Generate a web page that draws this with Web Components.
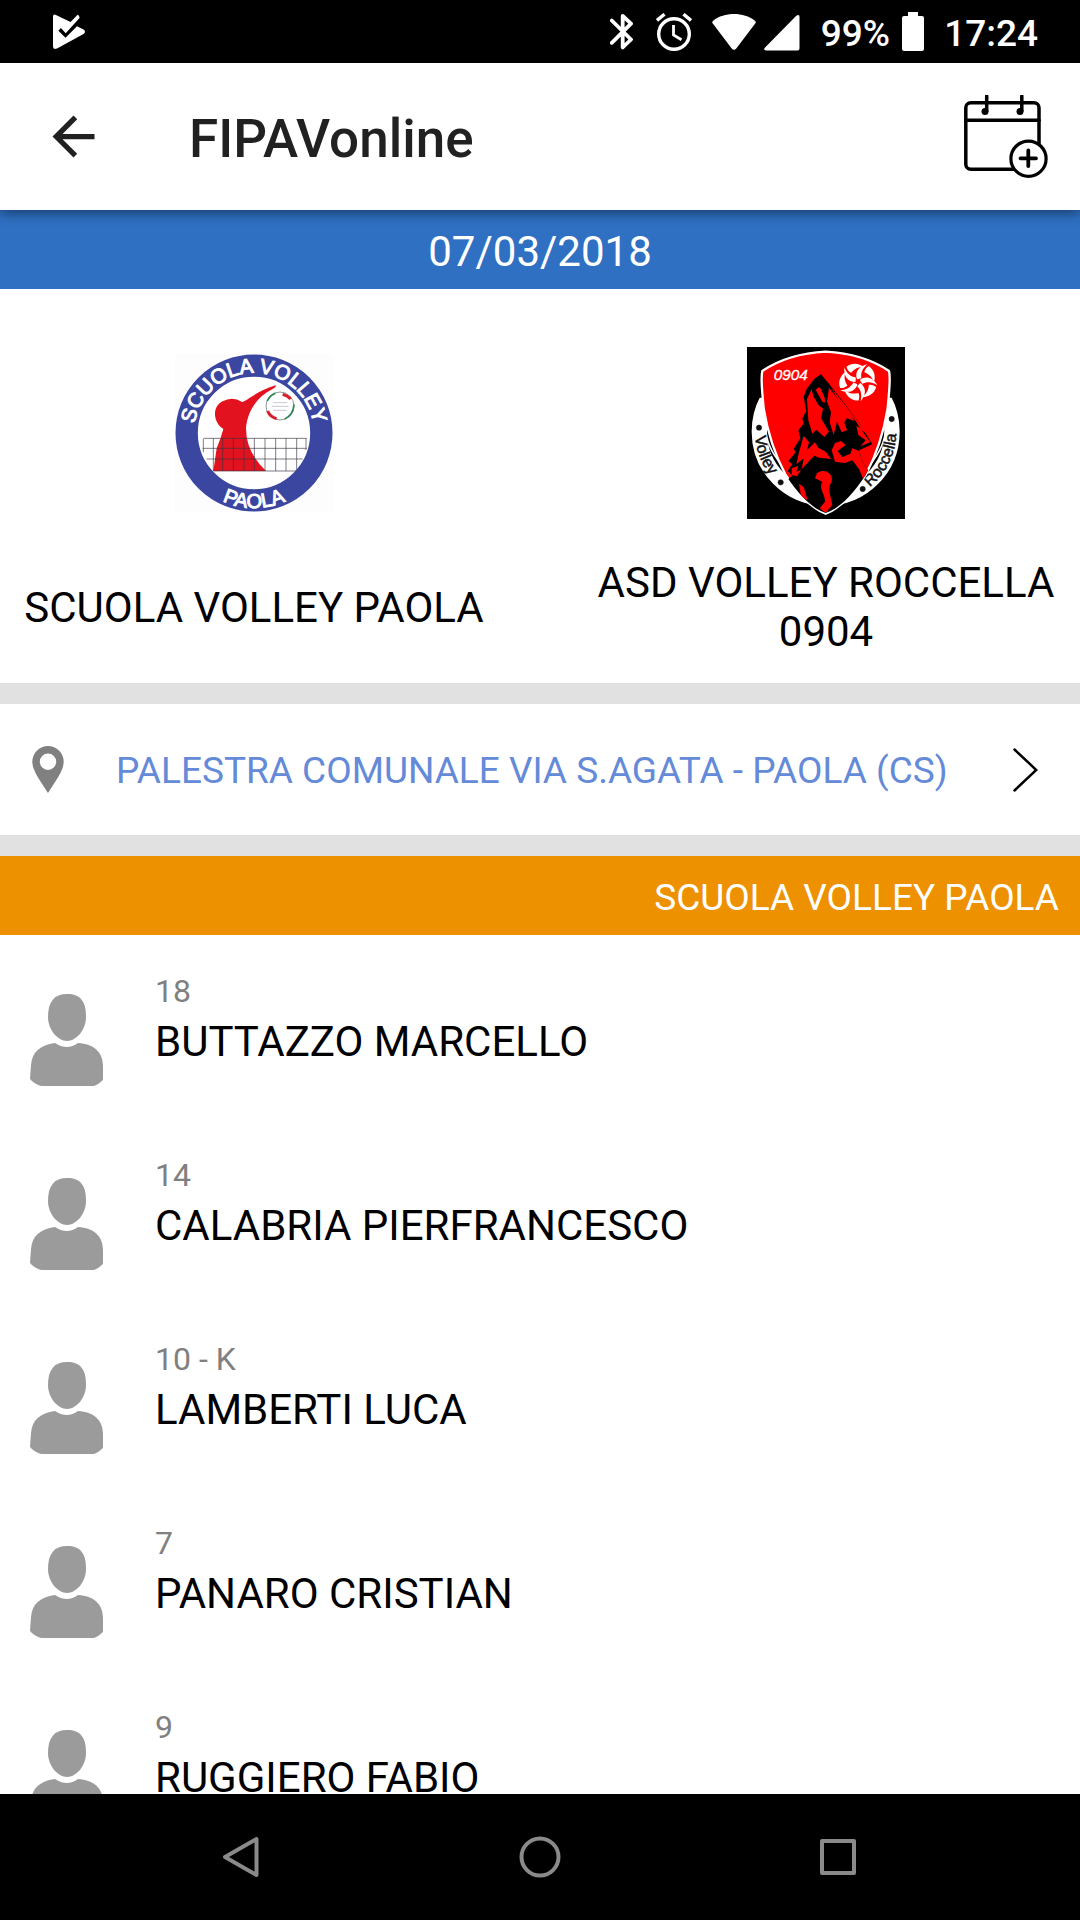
<!DOCTYPE html>
<html lang="it">
<head>
<meta charset="utf-8">
<meta name="viewport" content="width=device-width, initial-scale=1">
<title>FIPAVonline</title>
<style>
  body {
    margin: 0;
    height: 100vh;
    display: flex;
    flex-direction: column;
    background: #fff;
    color: #000;
    font-family: Roboto, "Liberation Sans", sans-serif;
    font-size: 42px;
    line-height: 49px;
  }
  main { flex: 1; min-height: 0; overflow: hidden; }
</style>
</head>
<body>
  <status-bar></status-bar>
  <app-bar>FIPAVonline</app-bar>
  <main>
    <date-banner>07/03/2018</date-banner>
    <match-teams>
      <team-card><crest-paola slot="logo"></crest-paola>SCUOLA VOLLEY PAOLA</team-card>
      <team-card><crest-roccella slot="logo"></crest-roccella>ASD VOLLEY ROCCELLA 0904</team-card>
    </match-teams>
    <venue-link>PALESTRA COMUNALE VIA S.AGATA - PAOLA (CS)</venue-link>
    <team-heading>SCUOLA VOLLEY PAOLA</team-heading>
    <player-row><span slot="number">18</span>BUTTAZZO MARCELLO</player-row>
    <player-row><span slot="number">14</span>CALABRIA PIERFRANCESCO</player-row>
    <player-row><span slot="number">10 - K</span>LAMBERTI LUCA</player-row>
    <player-row><span slot="number">7</span>PANARO CRISTIAN</player-row>
    <player-row><span slot="number">9</span>RUGGIERO FABIO</player-row>
  </main>
  <nav-bar></nav-bar>

<script>
const define = (name, html) => {
  const template = document.createElement('template');
  template.innerHTML = html;
  customElements.define(name, class extends HTMLElement {
    constructor() {
      super();
      this.attachShadow({ mode: 'open' }).append(template.content.cloneNode(true));
    }
  });
};

define('status-bar', `
  <style>
    :host { display: flex; align-items: center; height: 63px; padding: 0 42px 0 53px; background: #000; color: #fff;
            font-size: 37px; font-weight: 500; line-height: 43px; }
    svg { display: block; fill: #fff; }
    span { padding-top: 3px; }
    .space { flex: 1; }
    .bt { margin-right: 23px; } .alarm { margin-right: 20px; } .wifi { margin-right: 8px; }
    .signal { margin-right: 21px; } .battery { margin: 0 20px 0 12px; }
  </style>
  <svg width="33" height="36" viewBox="0 0 33 36" aria-hidden="true">
    <path d="M0 2.5Q0 -.5 3 .9L17.5 8 24.6.8Q26.700 1.600 26.500 4L12.700 19.300 7.900 14 5.400 16.700 12.500 23.700 24 12.300 30.500 15.500Q33.500 17.500 30.500 20L4 34.500Q0 36 0 32.500Z"/>
  </svg>
  <span class="space"></span>
  <svg class="bt" width="23" height="37" viewBox="0 0 23 37" aria-hidden="true">
    <path d="M1.800 7.500 21 26.500 12.700 34.500V2.800L21 10.700 1.800 29.800" fill="none" stroke="#fff" stroke-width="3.800" stroke-linejoin="round" stroke-linecap="round"/>
  </svg>
  <svg class="alarm" width="36" height="38" viewBox="0 0 36 38" aria-hidden="true">
    <g fill="none" stroke="#fff" stroke-width="3.400"><circle cx="18" cy="21" r="15.300"/><path d="M1 7.500 8.500 1.200M35 7.500 27.500 1.200"/><path d="M17.500 12V22L25.500 26.800" stroke-width="2.800"/></g>
  </svg>
  <svg class="wifi" width="44" height="38" viewBox="0 0 44 38" aria-hidden="true">
    <path d="M.8 10.500Q-.5 8.900 1.200 7.700C12-1.200 32-1.200 42.800 7.700Q44.500 8.900 43.200 10.500L24.300 35.500Q22 38.200 19.700 35.500Z"/>
  </svg>
  <svg class="signal" width="36" height="38" viewBox="0 0 36 38" aria-hidden="true">
    <path d="M.8 34.800 32.300 2.800Q35.500.5 35.500 4V35.500Q35.500 37.500 33.500 37.500H2Q-1 37 .8 34.800Z"/>
  </svg>
  <span>99%</span>
  <svg class="battery" width="22" height="39" viewBox="0 0 22 39" aria-hidden="true">
    <path d="M6 0H16V4H20Q22 4 22 6V37Q22 39 20 39H2Q0 39 0 37V6Q0 4 2 4H6Z"/>
  </svg>
  <span>17:24</span>
`);

define('app-bar', `
  <style>
    :host { display: flex; align-items: center; height: 147px; padding: 0 32px 0 42px; background: #fff; color: #212121;
            position: relative; z-index: 1; box-shadow: 0 4px 11px rgba(0,0,0,.42); }
    button { border: 0; padding: 0; background: none; display: block; }
    svg { display: block; }
    h1 { flex: 1; margin: 0 0 0 84px; padding-top: 5px; font-size: 53px; font-weight: 500; line-height: 63px; }
  </style>
  <button aria-label="Indietro"><svg width="63" height="63" viewBox="0 0 24 24"><path fill="#212121" d="M20 11H7.830L13.420 5.410 12 4 4 12 12 20 13.410 18.590 7.830 13H20Z"/></svg></button>
  <h1><slot></slot></h1>
  <button aria-label="Aggiungi al calendario"><svg width="84" height="84" viewBox="964 95 84 84">
    <g fill="none" stroke="#000" stroke-width="3.500" stroke-linecap="round">
      <rect x="965.800" y="102.700" width="73.200" height="66.600" rx="5"/><path d="M966 120.200H1039"/>
      <path d="M986.700 96V111M1021.800 96V111"/>
    </g>
    <circle cx="985" cy="111.500" r="3.500"/><circle cx="1020" cy="111.500" r="3.500"/>
    <circle cx="1028.500" cy="158.700" r="17.600" fill="#fff" stroke="#000" stroke-width="3.200"/>
    <path d="M1020.500 158.300H1036M1028.300 150.500V166" stroke="#000" stroke-width="3.800" stroke-linecap="round"/>
  </svg></button>
`);

define('date-banner', `
  <style>:host { display: block; padding: 17px 21px 13px; text-align: center; background: #2f70c3; color: #fff; }</style>
  <slot></slot>
`);

define('match-teams', `
  <style>:host { display: grid; grid-template-columns: 1fr 1fr; gap: 106px; padding: 58px 21px 27px; }</style>
  <slot></slot>
`);

define('team-card', `
  <style>
    :host { display: flex; flex-direction: column; align-items: center; gap: 39px; text-align: center; }
    .logo { height: 172px; display: flex; align-items: center; }
    .name { flex: 1; display: flex; align-items: center; }
  </style>
  <div class="logo"><slot name="logo"></slot></div>
  <div class="name"><div><slot></slot></div></div>
`);

define('crest-paola', `
  <style>:host { display: block; } svg { display: block; overflow: visible; } text { font-family: "Liberation Sans", sans-serif; fill: #fff; stroke: #fff; stroke-width: 3; }</style>
  <svg width="158" height="158" viewBox="45 57 474 474" role="img" aria-label="Scuola Volley Paola">
    <defs>
      <path id="top" d="M102 294A180 180 0 0 1 462 294"/>
      <path id="bottom" d="M57 294A225 225 0 0 0 507 294"/>
    </defs>
    <rect x="45" y="57" width="474" height="474" fill="#fdfdfd"/>
    <circle cx="282" cy="294" r="202" fill="#fff" stroke="#3a46a0" stroke-width="67"/>
    <path fill="#e2131f" d="M160 408 170 340 182 308 190 282C158 262 156 214 188 199Q218 183 246 201C262 197 290 168 347 151Q350 155 338 162C288 186 262 232 258 280Q258 352 318 408Z"/>
    <path d="M130 310H440M128 340H440M140 372H428M160 408H408M130 312V352M160 310V408M188 310V408M220 310V408M252 310V408M283 310V408M315 310V408M347 310V408M378 310V408M410 310V404M438 310V345" fill="none" stroke="#3c3440" stroke-width="3" opacity=".65"/>
    <g fill="none" stroke-width="5">
      <circle cx="360" cy="213" r="42" fill="#fff" stroke="#8b9a92" stroke-width="3"/>
      <path stroke="#2b8a52" d="M322 198Q330 180 346 175M402 208Q400 240 374 252"/>
      <path stroke="#d8202c" stroke-width="9" d="M368 178Q384 182 392 192M323 228Q330 246 350 251"/>
      <path stroke="#aab" stroke-width="2" d="M340 203H382M336 214H386M340 226H380"/>
    </g>
    <text font-size="62" text-anchor="middle"><textPath href="#top" startOffset="50%">SCUOLA VOLLEY</textPath></text>
    <text font-size="60" text-anchor="middle"><textPath href="#bottom" startOffset="50%">PAOLA</textPath></text>
  </svg>
`);

define('crest-roccella', `
  <style>:host { display: block; } svg { display: block; } text { font-family: "Liberation Sans", sans-serif; }</style>
  <svg width="158" height="172" viewBox="36 36 474 516" role="img" aria-label="ASD Volley Roccella 0904">
    <defs>
      <path id="ring" d="M60 290A212 212 0 0 0 484 290"/>
      <g id="blade">
        <path d="M-3 -7C-10 -26 0 -46 28 -52C12 -38 8 -26 10 -10Z"/>
        <path d="M32 -47C48 -36 54 -18 48 2C42 -14 34 -22 19 -28Q20 -38 32 -47Z"/>
      </g>
      <clipPath id="shield"><path d="M272 52Q385 58 460 108C466 130 460 170 458 220Q440 330 392 420Q330 515 272 534Q214 515 152 420Q104 330 86 220C84 170 78 130 84 108Q159 58 272 52Z"/></clipPath>
      <clipPath id="low"><rect x="36" y="188" width="474" height="364"/></clipPath>
    </defs>
    <rect x="36" y="36" width="474" height="516"/>
    <g clip-path="url(#low)"><circle cx="272" cy="290" r="199" fill="none" stroke="#fff" stroke-width="46"/></g>
    <path d="M92 288Q100 350 152 402M452 288Q444 350 392 402" fill="none" stroke="#fff" stroke-width="5"/>
    <g fill="#111" stroke="#111" stroke-width="1.500">
      <text font-size="48"><textPath href="#ring" startOffset="14">Volley</textPath></text>
      <text font-size="48" text-anchor="end"><textPath href="#ring" startOffset="99%">Roccella</textPath></text>
      <circle cx="72" cy="278" r="8"/><circle cx="137" cy="442" r="8"/><circle cx="383" cy="462" r="8"/><circle cx="470" cy="252" r="8"/>
    </g>
    <path fill="#f00" stroke="#fff" stroke-width="7" d="M272 50Q385 56 462 108C468 130 462 170 458 220Q440 330 392 420Q330 515 272 536Q214 515 152 420Q104 330 86 220C82 170 76 130 82 108Q159 56 272 50Z"/>
    <g clip-path="url(#shield)">
      <path d="M258 118 240 130 216 160 206 185 214 228 202 250 206 266 190 286 196 310 176 342 182 352 160 378 172 388 158 408 172 422 150 440 272 550 400 460 385 440 404 412 384 384 372 346 412 328 378 272 330 208 283 148Z"/>
      <g fill="#f00">
        <path d="M216 192 230 162 236 186 264 222 258 250 282 290 268 306 244 284 232 296 220 256Z"/>
        <path d="M242 164 252 156 266 170 276 205 262 200Z"/>
        <path d="M282 158 326 214 358 258 336 250 328 262 336 286 320 292 306 260 296 300 284 262 288 232 276 200Z"/>
        <path d="M288 158 332 212 396 296 378 284 362 258 330 228Z"/>
        <path d="M364 272 376 280 406 322 376 334 392 316 370 300Z"/>
        <path d="M206 302 222 322 216 346 240 322 250 338 272 350 288 372 252 368 238 362 200 402 206 370 184 388 192 352Z"/>
        <path d="M290 346 300 324 318 318 332 330 308 348 322 366 346 356 352 340 372 348 384 384 402 410 386 436 372 402 352 376 330 384 300 380Z"/>
        <path d="M246 414C272 396 300 420 288 444C276 464 288 484 292 510L272 534 254 520 270 500C270 474 250 464 262 440L240 430Z"/>
        <path d="M192 446 206 456 218 496 198 484Z"/>
        <path d="M170 400 190 392 184 410 198 404 186 424 170 420Z"/>
      </g>
      <path d="M232 156Q248 220 270 216Q280 196 262 166" fill="none" stroke="#000" stroke-width="6"/>
    </g>
    <text x="116" y="136" font-size="46" font-style="italic" fill="#fff" stroke="#fff">0904</text>
    <g fill="#fff" transform="translate(369 140)">
      <use href="#blade"/><use href="#blade" transform="rotate(72)"/><use href="#blade" transform="rotate(144)"/><use href="#blade" transform="rotate(216)"/><use href="#blade" transform="rotate(288)"/>
    </g>
  </svg>
`);

define('venue-link', `
  <style>
    :host { display: block; border: solid #e1e1e1; border-width: 21px 0; font-size: 37px; line-height: 43px; }
    a { display: flex; align-items: center; padding: 42px 42px 42px 32px; color: #648ad8; text-decoration: none; }
    .text { flex: 1; margin-left: 52px; padding-top: 2px; }
    svg { display: block; }
  </style>
  <a href="#mappa">
    <svg width="32" height="47" viewBox="0 0 32 47" aria-hidden="true"><path fill="#808080" fill-rule="evenodd" d="M16 0A15.700 15.700 0 0 1 31.700 16C31.700 25 22 37 16 47C10 37 .3 25 .3 16A15.700 15.700 0 0 1 16 0ZM16 7.500A8.200 8.200 0 1 0 16 23.900A8.200 8.200 0 1 0 16 7.500Z"/></svg>
    <span class="text"><slot></slot></span>
    <svg width="25" height="44" viewBox="0 0 25 44" aria-hidden="true"><path d="M1.500 1.500 23.300 22 1.500 42.500" fill="none" stroke="#000" stroke-width="2.500" stroke-linecap="round"/></svg>
  </a>
`);

define('team-heading', `
  <style>
    :host { display: block; padding: 20px 21px 16px; background: #ee9100; color: #fff; text-align: right; }
    h2 { margin: 0; font-size: 37px; line-height: 43px; font-weight: 400; }
  </style>
  <h2><slot></slot></h2>
`);

define('player-row', `
  <style>
    :host { display: flex; gap: 52px; padding: 37px 30px 33px; }
    svg { display: block; margin-top: 22px; fill: #9b9b9b; }
    .number { color: #808080; font-size: 32px; line-height: 38px; margin-bottom: 7px; }
  </style>
  <svg width="73" height="92" viewBox="0 0 73 92" aria-hidden="true">
    <path d="M37 0C51 0 56 8 56 23C56 36 46 47 37 47C28 47 18 36 18 23C18 8 24 0 37 0Z"/>
    <path d="M25 49Q37 57 48 49C64 50 73 58 73 72V86Q69 90 64 92H11Q4 90 0 85L1 71C2 58 10 51 25 49Z"/>
  </svg>
  <div>
    <div class="number"><slot name="number"></slot></div>
    <div><slot></slot></div>
  </div>
`);

define('nav-bar', `
  <style>
    :host { display: flex; height: 126px; padding: 0 93px; background: #000; }
    button { flex: 1; border: 0; padding: 0; background: none; display: flex; align-items: center; justify-content: center; }
    svg { fill: none; stroke: #8a8a8a; stroke-width: 4; stroke-linejoin: round; }
  </style>
  <button aria-label="Indietro"><svg width="60" height="60" viewBox="0 0 60 60"><path d="M44.500 12V48L13 30Z"/></svg></button>
  <button aria-label="Home"><svg width="60" height="60" viewBox="0 0 60 60"><circle cx="30" cy="30" r="18.500"/></svg></button>
  <button aria-label="Recenti"><svg width="60" height="60" viewBox="0 0 60 60"><rect x="14" y="14" width="32" height="32"/></svg></button>
`);
</script>
</body>
</html>
